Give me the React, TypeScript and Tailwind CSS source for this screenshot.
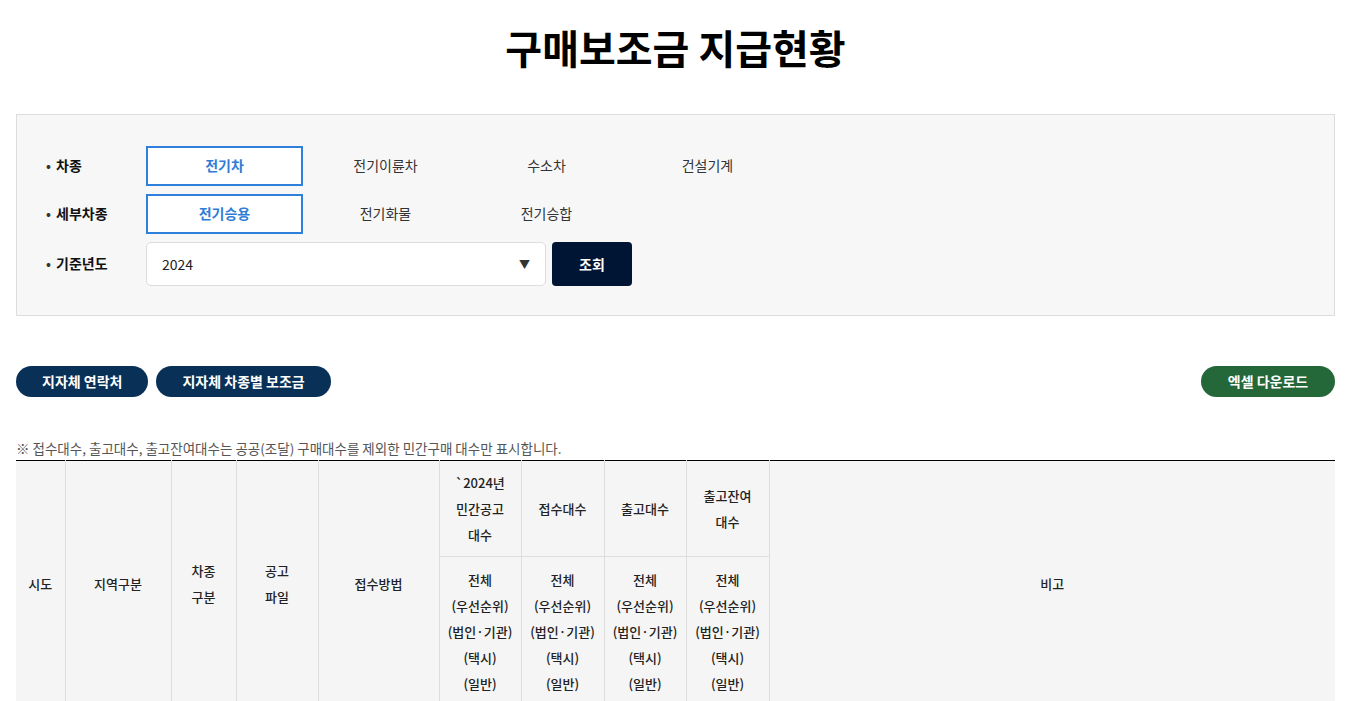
import React, { useState } from "react";

const font = { fontFamily: '"Noto Sans CJK KR", "Noto Sans", sans-serif' };

const carTypes = ["전기차", "전기이륜차", "수소차", "건설기계"];
const subTypes = ["전기승용", "전기화물", "전기승합"];

function Option({
  label,
  active,
  onClick,
}: {
  label: string;
  active: boolean;
  onClick: () => void;
}) {
  return (
    <button
      onClick={onClick}
      className={`w-[157px] h-10 pb-[2px] text-[14px] ${
        active
          ? "border-2 border-[#2f80dc] bg-white text-[#2f7dd6] font-bold"
          : "border-2 border-transparent text-[#333]"
      }`}
    >
      {label}
    </button>
  );
}

function Label({ children }: { children: React.ReactNode }) {
  return (
    <div className="w-[100px] flex items-center pb-[2px] text-[14px] font-bold text-[#111]">
      <span className="w-[10px] text-[13px] leading-none text-[#333]">•</span>
      {children}
    </div>
  );
}

export default function App() {
  const [carType, setCarType] = useState(0);
  const [subType, setSubType] = useState(0);

  const th =
    "bg-[#f5f5f5] text-[13px] leading-[26px] font-medium text-[#222] border-r border-[#ddd] text-center align-middle";

  return (
    <div className="bg-white min-h-screen w-[1351px] px-4" style={font}>
      <h1 className="pt-[21px] text-center text-[40px] leading-[52px] font-bold text-black">
        구매보조금 지급현황
      </h1>

      <div className="mt-[41px] border border-[#ddd] bg-[#f7f7f7] pl-[29px] pt-[31px] pb-[29px] flex flex-col gap-2">
        <div className="flex items-center">
          <Label>차종</Label>
          <div className="flex gap-1">
            {carTypes.map((c, i) => (
              <Option key={c} label={c} active={carType === i} onClick={() => setCarType(i)} />
            ))}
          </div>
        </div>
        <div className="flex items-center">
          <Label>세부차종</Label>
          <div className="flex gap-1">
            {subTypes.map((c, i) => (
              <Option key={c} label={c} active={subType === i} onClick={() => setSubType(i)} />
            ))}
          </div>
        </div>
        <div className="flex items-center">
          <Label>기준년도</Label>
          <div className="flex gap-[6px]">
            <div className="w-[400px] h-[44px] bg-white border border-[#ddd] rounded-[5px] flex items-center justify-between pl-[15px] pr-[15px] text-[14px] text-[#222]">
              <span>2024</span>
              <span className="text-[11px] text-[#333]">▼</span>
            </div>
            <button className="w-20 h-[44px] rounded-[4px] bg-[#001433] text-white text-[14px] font-bold">
              조회
            </button>
          </div>
        </div>
      </div>

      <div className="mt-[50px] flex items-center justify-between">
        <div className="flex gap-2">
          <button className="h-[31px] px-[26px] rounded-full bg-[#093157] text-white text-[14px] font-bold">
            지자체 연락처
          </button>
          <button className="h-[31px] px-[26px] rounded-full bg-[#093157] text-white text-[14px] font-bold">
            지자체 차종별 보조금
          </button>
        </div>
        <button className="h-[31px] w-[134px] rounded-full bg-[#246739] text-white text-[14px] font-bold">
          엑셀 다운로드
        </button>
      </div>

      <p className="mt-[42px] text-[13.5px] leading-[18px] text-[#555]">
        ※ 접수대수, 출고대수, 출고잔여대수는 공공(조달) 구매대수를 제외한 민간구매 대수만 표시합니다.
      </p>

      <table className="mt-[3px] w-full table-fixed border-collapse border-t border-black">
        <colgroup>
          <col className="w-[49px]" />
          <col className="w-[106px]" />
          <col className="w-[65px]" />
          <col className="w-[82px]" />
          <col className="w-[121px]" />
          <col className="w-[82px]" />
          <col className="w-[83px]" />
          <col className="w-[82px]" />
          <col className="w-[83px]" />
          <col />
        </colgroup>
        <thead>
          <tr className="h-[96px]">
            <th rowSpan={2} className={th}>시도</th>
            <th rowSpan={2} className={th}>지역구분</th>
            <th rowSpan={2} className={th}>차종<br />구분</th>
            <th rowSpan={2} className={th}>공고<br />파일</th>
            <th rowSpan={2} className={th}>접수방법</th>
            <th className={`${th} border-b`}>`2024년<br />민간공고<br />대수</th>
            <th className={`${th} border-b`}>접수대수</th>
            <th className={`${th} border-b`}>출고대수</th>
            <th className={`${th} border-b`}>출고잔여<br />대수</th>
            <th rowSpan={2} className="bg-[#f5f5f5] text-[13px] font-medium text-[#222] text-center align-middle">
              비고
            </th>
          </tr>
          <tr>
            {[0, 1, 2, 3].map((i) => (
              <th key={i} className={`${th} py-[10px]`}>
                전체<br />(우선순위)<br />(법인·기관)<br />(택시)<br />(일반)
              </th>
            ))}
          </tr>
        </thead>
      </table>
    </div>
  );
}
